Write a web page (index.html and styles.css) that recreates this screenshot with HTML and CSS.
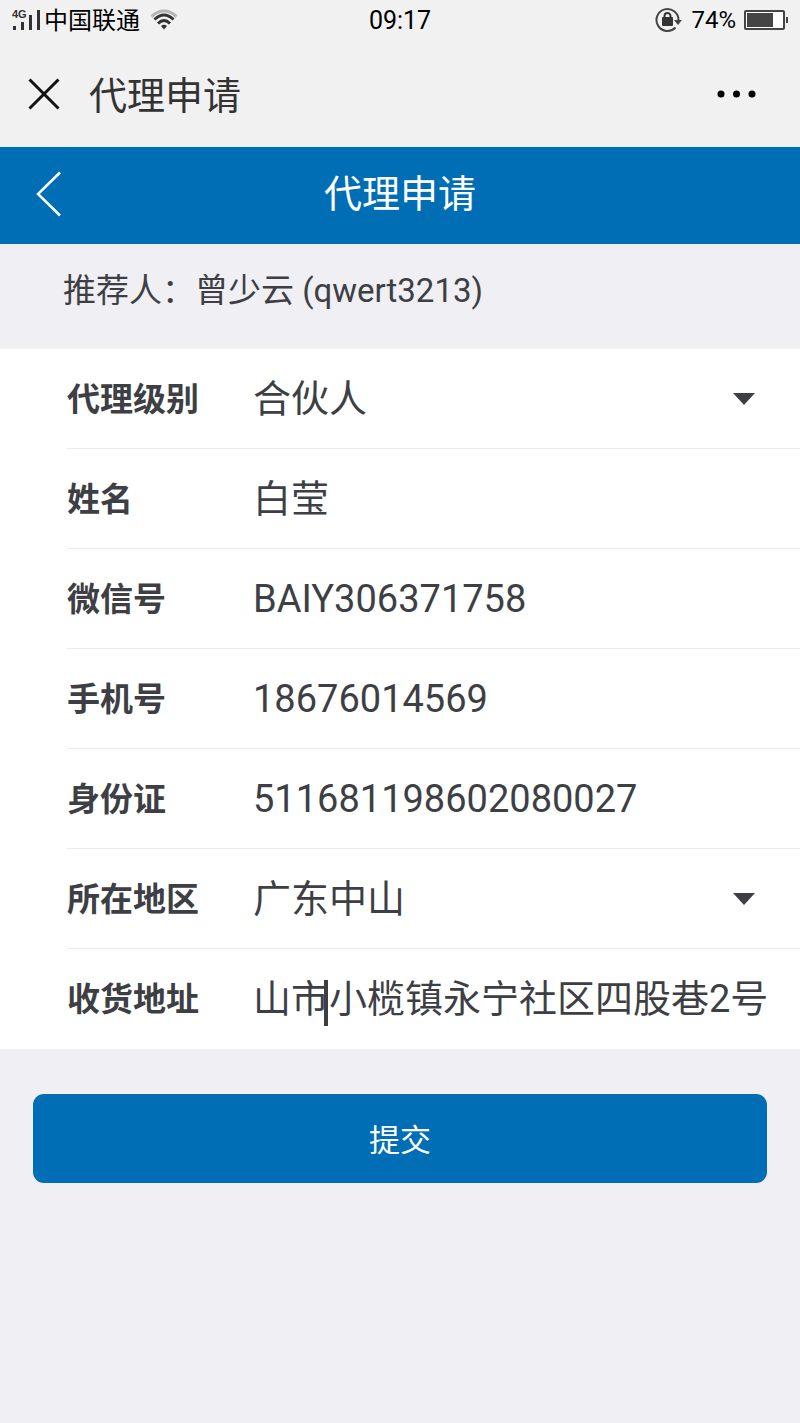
FILE: index.html
```
<!DOCTYPE html>
<html lang="zh-CN">
<head>
<meta charset="utf-8">
<meta name="viewport" content="width=device-width, initial-scale=1">
<title>代理申请</title>
<link rel="stylesheet" href="styles.css">
</head>
<body>
<div class="status-bar">
  <div class="status-side">
    <svg class="signal" viewBox="0 0 30 24" width="30" height="24" role="img" aria-label="4G">
      <text class="signal-text" x="0" y="10">4G</text>
      <path d="M1 18h3v4H1zM9 14h3v8H9zM17 7h3v15h-3zM25 2h3v20h-3z" fill="#333"/>
    </svg>
    <span class="carrier">中国联通</span>
    <svg class="wifi" viewBox="0 0 28 22" width="28" height="22" aria-hidden="true">
      <g fill="none" stroke-width="3">
        <path d="M1.500 7.500Q14 -3.500 26.500 7.500" stroke="#b5b5b5"/>
        <path d="M4.500 10.500Q14 1.500 23.500 10.500" stroke="#333"/>
        <path d="M8 14.500Q14 8.500 20 14.500" stroke="#333"/>
      </g>
      <path d="M14 20.500l-3-3.500q3-2.500 6 0z" fill="#333"/>
    </svg>
  </div>
  <time class="clock">09:17</time>
  <div class="status-side status-right">
    <svg viewBox="0 0 28 26" width="28" height="26" aria-hidden="true">
      <path d="M20.500 20.500A11 11 0 1 1 23.500 13" fill="none" stroke="#444" stroke-width="2"/>
      <path d="M19 13h8l-4 5z" fill="#444"/>
      <rect x="7" y="10" width="11" height="9" rx="1" fill="#333"/>
      <path d="M9.500 11V9a3 3 0 0 1 6 0v2" fill="none" stroke="#333" stroke-width="2"/>
    </svg>
    <span class="percent">74%</span>
    <svg viewBox="0 0 44 20" width="44" height="20" aria-hidden="true">
      <rect x="1" y="1" width="39" height="18" rx="1" fill="#fff" stroke="#444" stroke-width="2"/>
      <path d="M3 3h26v14H3zM42 7h2v6h-2z" fill="#444"/>
    </svg>
  </div>
</div>
<header class="browser-bar">
  <button class="icon-button" type="button" aria-label="关闭">
    <svg viewBox="0 0 32 32" width="32" height="32"><path d="M1.500 1.500l29 29M30.500 1.500l-29 29" stroke="#111" stroke-width="3"/></svg>
  </button>
  <span class="browser-title">代理申请</span>
  <button class="icon-button" type="button" aria-label="更多">
    <svg viewBox="0 0 40 8" width="40" height="8" fill="#000"><circle cx="4" cy="4" r="3.500"/><circle cx="19.500" cy="4" r="3.500"/><circle cx="35" cy="4" r="3.500"/></svg>
  </button>
</header>
<nav class="nav-bar">
  <button class="icon-button" type="button" aria-label="返回">
    <svg viewBox="0 0 26 46" width="26" height="46"><path d="M24 1.500L2 23l22 21.500" fill="none" stroke="#fff" stroke-width="2.500"/></svg>
  </button>
  <h1 class="nav-title">代理申请</h1>
</nav>
<main>
  <p class="referrer">推荐人：曾少云 (qwert3213)</p>
  <form>
    <div class="fields">
      <div class="field">
        <label class="label" for="level">代理级别</label>
        <div class="select-wrap">
          <select class="control" id="level"><option>合伙人</option></select>
          <svg class="arrow" viewBox="0 0 22 12" width="22" height="12" aria-hidden="true"><path d="M0 0h22L11 12z" fill="#3d3f45"/></svg>
        </div>
      </div>
      <div class="field">
        <label class="label" for="name">姓名</label>
        <input class="control" id="name" type="text" value="白莹">
      </div>
      <div class="field">
        <label class="label" for="wechat">微信号</label>
        <input class="control" id="wechat" type="text" value="BAIY306371758">
      </div>
      <div class="field">
        <label class="label" for="phone">手机号</label>
        <input class="control" id="phone" type="tel" value="18676014569">
      </div>
      <div class="field">
        <label class="label" for="idcard">身份证</label>
        <input class="control" id="idcard" type="text" value="511681198602080027">
      </div>
      <div class="field">
        <label class="label" for="region">所在地区</label>
        <div class="select-wrap">
          <select class="control" id="region"><option>广东中山</option></select>
          <svg class="arrow" viewBox="0 0 22 12" width="22" height="12" aria-hidden="true"><path d="M0 0h22L11 12z" fill="#3d3f45"/></svg>
        </div>
      </div>
      <div class="field">
        <label class="label" for="address">收货地址</label>
        <div class="caret-wrap">
          <input class="control" id="address" type="text" value="山市小榄镇永宁社区四股巷2号">
          <span class="caret"></span>
        </div>
      </div>
    </div>
    <button class="submit" type="submit">提交</button>
  </form>
</main>
</body>
</html>
```
FILE: styles.css
```
* {
  box-sizing: border-box;
}

body {
  margin: 0;
  background: #efeff4;
  color: #3d3f45;
  font-family: Roboto, "Noto Sans CJK SC", sans-serif;
}

button,
input,
select {
  margin: 0;
  padding: 0;
  border: 0;
  background: none;
  color: inherit;
  font: inherit;
}

svg {
  display: block;
}

.status-bar {
  display: flex;
  align-items: center;
  height: 40px;
  padding: 0 12px;
  background: #f1f1f1;
  color: #000;
  font-size: 24px;
  line-height: 32px;
}

.status-side {
  display: flex;
  flex: 1;
  align-items: center;
}

.status-right {
  justify-content: flex-end;
  gap: 8px;
}

.signal {
  margin-right: 2px;
}

.signal-text {
  font: bold 11px "Liberation Sans", sans-serif;
  fill: #333;
}

.carrier {
  padding-top: 2px;
}

.clock {
  padding-top: 2px;
  font-size: 25px;
}

.wifi {
  margin-left: 10px;
}

.browser-bar {
  display: flex;
  align-items: center;
  height: 107px;
  padding: 0 43px 0 28px;
  background: #f1f1f1;
  color: #333;
  font-size: 38px;
}

.browser-title {
  flex: 1;
  padding-top: 4px;
  margin-left: 29px;
  line-height: 56px;
}

.nav-bar {
  display: grid;
  grid-template-columns: 1fr auto 1fr;
  align-items: center;
  height: 97px;
  padding: 0 36px 4px;
  background: #006eb4;
  color: #fff;
}

.icon-button {
  justify-self: start;
  cursor: pointer;
}

.nav-title {
  margin: 0;
  font-size: 38px;
  font-weight: 400;
  line-height: 56px;
}

.referrer {
  margin: 0;
  padding: 22px 63px 33px;
  font-size: 33px;
  line-height: 50px;
}

.fields {
  padding-left: 67px;
  background: #fff;
}

.field {
  display: grid;
  grid-template-columns: 186px 1fr;
  align-items: center;
  height: 100px;
  border-bottom: 1px solid #ececee;
}

.field:last-child {
  border-bottom-color: transparent;
}

.label {
  padding-top: 2px;
  font-size: 33px;
  font-weight: 700;
  line-height: 48px;
}

.control {
  display: block;
  width: 100%;
  height: 60px;
  outline: 0;
  font-size: 38px;
  line-height: 60px;
  appearance: none;
}

.select-wrap,
.caret-wrap {
  position: relative;
}

.arrow {
  position: absolute;
  top: 24px;
  right: 45px;
  pointer-events: none;
}

.caret {
  position: absolute;
  top: 11px;
  left: 71px;
  width: 4px;
  height: 46px;
  background: #3d3f45;
}

.submit {
  display: block;
  width: calc(100% - 66px);
  height: 89px;
  margin: 45px 33px;
  padding-bottom: 3px;
  border-radius: 11px;
  background: #006eb4;
  color: #fff;
  font-size: 31px;
  cursor: pointer;
}
```
